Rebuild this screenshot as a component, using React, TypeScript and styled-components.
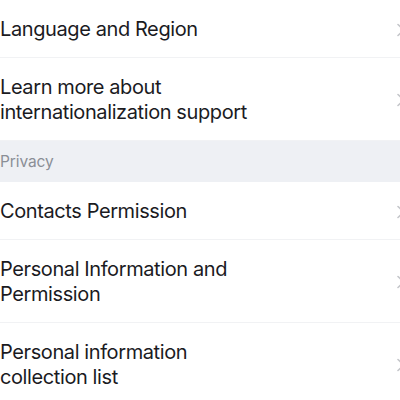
import React from "react";
import styled, { createGlobalStyle } from "styled-components";

const Global = createGlobalStyle`
  html, body { margin: 0; padding: 0; background: #ffffff; overflow: hidden; }
  body { font-family: Inter, "Noto Sans", sans-serif; }
`;

const List = styled.div`
  width: 408px;
  display: flex;
  flex-direction: column;
`;

const Row = styled.div`
  display: flex;
  align-items: center;
  justify-content: space-between;
  padding: 17px 0 15px 0;
  border-bottom: 1px solid #f1f2f4;
  background: #ffffff;
`;

const Label = styled.div`
  font-size: 20px;
  line-height: 25px;
  letter-spacing: -0.4px;
  color: #1b1b1f;
  max-width: 262px;
`;

const Chevron = styled.svg`
  width: 12px;
  height: 14px;
  flex: none;
`;

const Header = styled.div`
  height: 41px;
  display: flex;
  align-items: center;
  background: #eef0f4;
  font-size: 15.5px;
  letter-spacing: -0.1px;
  color: #8a8e96;
`;

const Arrow = () => (
  <Chevron viewBox="0 0 12 14">
    <path d="M2 1.5 L8 7 L2 12.5" fill="none" stroke="#c4c6ca" strokeWidth="1.6" strokeLinecap="round" strokeLinejoin="round" />
  </Chevron>
);

const items1 = ["Language and Region", "Learn more about internationalization support"];
const items2 = ["Contacts Permission", "Personal Information and Permission", "Personal information collection list"];

export default function App() {
  return (
    <>
      <Global />
      <List>
        {items1.map((t) => (
          <Row key={t}>
            <Label>{t}</Label>
            <Arrow />
          </Row>
        ))}
        <Header>Privacy</Header>
        {items2.map((t) => (
          <Row key={t}>
            <Label>{t}</Label>
            <Arrow />
          </Row>
        ))}
      </List>
    </>
  );
}
